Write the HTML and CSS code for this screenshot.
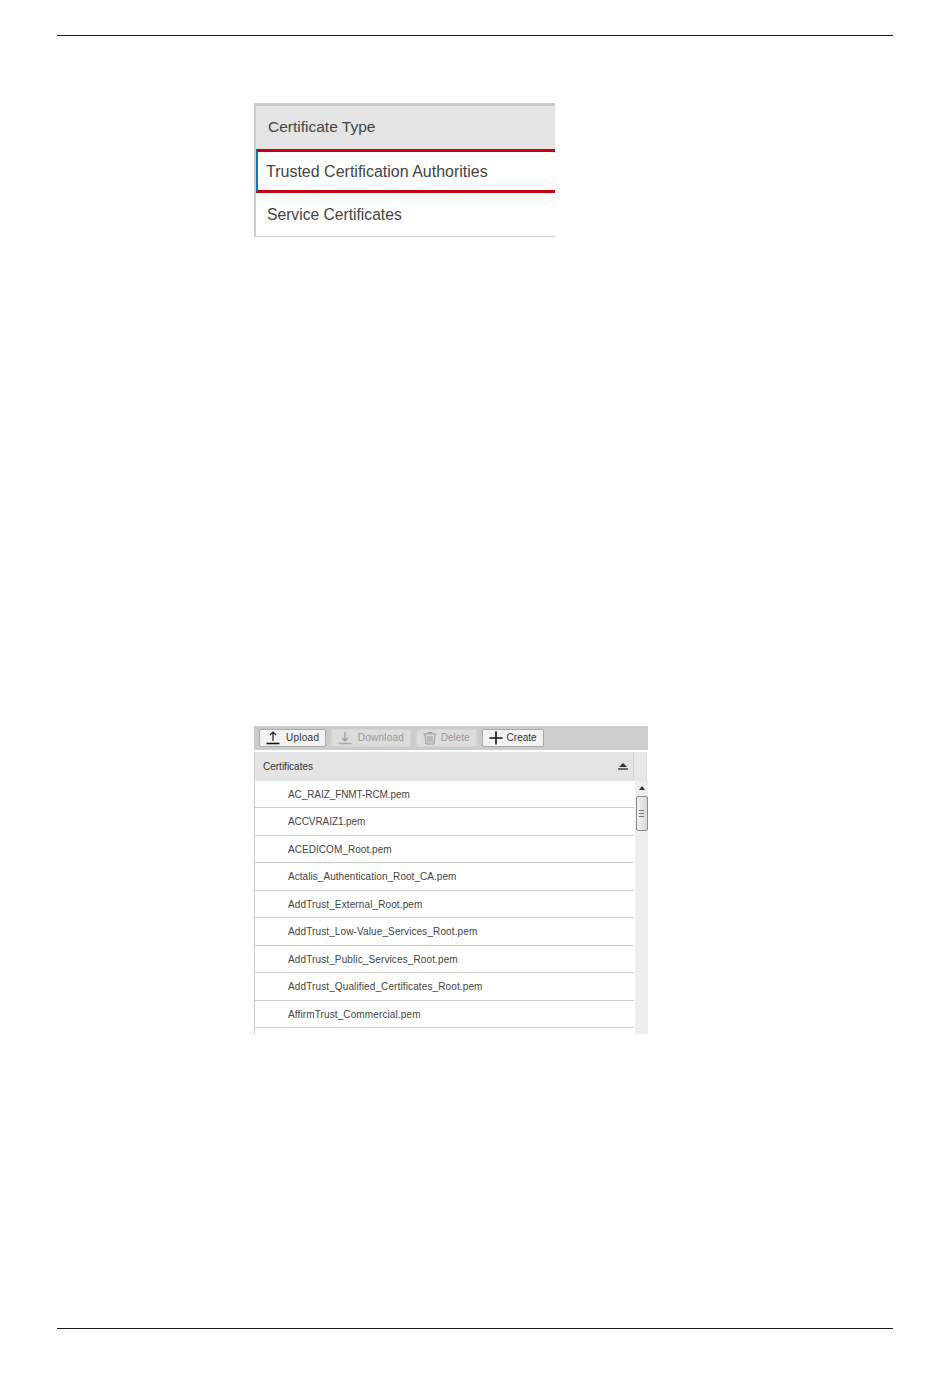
FILE: index.html
```html
<!DOCTYPE html>
<html lang="en">
<head>
<meta charset="utf-8">
<title>Certificates</title>
<link rel="stylesheet" href="styles.css">
</head>
<body>
<div class="page">
  <hr class="rule">
  <main class="content">
    <section class="type-card">
      <div class="type-head">Certificate Type</div>
      <div class="type-row selected">Trusted Certification Authorities</div>
      <div class="type-row">Service Certificates</div>
    </section>
    <section class="cert-card">
      <div class="toolbar">
        <button class="tool">
          <svg class="ico" viewBox="0 0 14 14"><path d="M7 1 L7 10 M4 4 L7 1 L10 4" fill="none" stroke="#222" stroke-width="1.2"/><path d="M0.5 12.5H13.5" stroke="#111" stroke-width="1.6"/></svg>
          <span>Upload</span>
        </button>
        <button class="tool off">
          <svg class="ico" viewBox="0 0 14 14"><path d="M7 1 L7 10 M4 7 L7 10 L10 7" fill="none" stroke="#999" stroke-width="1.2"/><path d="M0.5 12.5H13.5" stroke="#aaa" stroke-width="1.6"/></svg>
          <span>Download</span>
        </button>
        <button class="tool off tight">
          <svg class="ico" viewBox="0 0 14 14"><path d="M0.5 3H13.5M5 3V1.5H9V3M2 3.5L3 13H11L12 3.5M5 5V11.5M7 5V11.5M9 5V11.5" fill="none" stroke="#999" stroke-width="1"/></svg>
          <span>Delete</span>
        </button>
        <button class="tool tight">
          <svg class="ico" viewBox="0 0 14 14"><path d="M7 0.5V13.5M0.5 7H13.5" fill="none" stroke="#111" stroke-width="1.6"/></svg>
          <span>Create</span>
        </button>
      </div>
      <div class="grid-head">
        <div class="grid-title">
          <span>Certificates</span>
          <svg class="sort" viewBox="0 0 10 7"><path d="M5 0L9 4H1Z" fill="#333"/><path d="M0 6H10" stroke="#222" stroke-width="1.2"/></svg>
        </div>
        <div class="grid-corner"></div>
      </div>
      <div class="grid-body">
        <ul class="list">
          <li class="caps">AC_RAIZ_FNMT-RCM.pem</li>
          <li class="caps">ACCVRAIZ1.pem</li>
          <li class="flat">ACEDICOM_Root.pem</li>
          <li class="flat">Actalis_Authentication_Root_CA.pem</li>
          <li>AddTrust_External_Root.pem</li>
          <li>AddTrust_Low-Value_Services_Root.pem</li>
          <li>AddTrust_Public_Services_Root.pem</li>
          <li>AddTrust_Qualified_Certificates_Root.pem</li>
          <li>AffirmTrust_Commercial.pem</li>
        </ul>
        <div class="scroll">
          <svg class="arrow" viewBox="0 0 6 4"><path d="M3 0L6 4H0Z" fill="#333"/></svg>
          <div class="thumb"><i></i><i></i><i></i></div>
        </div>
      </div>
    </section>
  </main>
  <hr class="rule">
</div>
</body>
</html>
```
FILE: styles.css
```css
* { box-sizing: border-box; }
html, body { margin: 0; background: #fff; }
body { font-family: "Liberation Sans", Arial, sans-serif; color: #3a3a3a; }
.page { height: 1378px; padding: 35px 57px 0; display: flex; flex-direction: column; }
.rule { margin: 0; border: 0; height: 1px; background: #1a1a1a; flex: none; }
.content { height: 1292px; padding: 67px 0 0 197px; display: flex; flex-direction: column; }

.type-card { width: 301px; height: 134px; border: solid #ccc; border-width: 3px 0 1px 2px; display: flex; flex-direction: column; }
.type-head { height: 43px; background: #e4e4e4; padding-left: 12px; font-size: 15.5px; line-height: 42px; color: #444; }
.type-row { padding-left: 11px; font-size: 15.65px; color: #444; line-height: 43px; flex: 1; }
.type-row.selected { flex: none; height: 44px; border-top: 3px solid #c8000f; border-bottom: 3px solid #c8000f; border-left: 2px solid #0a78b8; padding-left: 8px; font-size: 16px; line-height: 40px; }

.cert-card { margin-top: 489px; width: 394px; height: 308px; overflow: hidden; display: flex; flex-direction: column; }
.toolbar { height: 24px; flex: none; background: #ccc; display: flex; gap: 5px; padding: 3px 0 0 5px; align-items: flex-start; }
.tool { height: 18px; padding: 0 5.5px 1px 6px; display: flex; align-items: center; gap: 6px; background: #f2f2f2; border: 1px solid #aaa; border-radius: 2px; font: 10px "Liberation Sans", Arial, sans-serif; letter-spacing: 0.25px; color: #333; }
.tool.off { background: #dcdcdc; border-color: #d4d4d4; color: #999; }
.tool.tight { gap: 4px; letter-spacing: 0; padding-right: 6px; }
.ico { width: 14px; height: 14px; flex: none; }

.grid-head { height: 29px; flex: none; margin-top: 2px; display: flex; }
.grid-title { width: 380px; background: #e4e4e4; border-left: 1px solid #ccc; border-right: 1px solid #d4d4d4; padding: 0 5px 0 8px; display: flex; align-items: center; justify-content: space-between; font-size: 10px; color: #333; }
.sort { width: 10px; height: 7px; }
.grid-corner { width: 13px; background: #e8e8e8; border-right: 1px solid #ddd; }

.grid-body { flex: 1; min-height: 0; display: flex; }
.list { width: 380px; margin: 0; padding: 0; list-style: none; border-left: 1px solid #ccc; }
.list li { height: 27.5px; padding: 6px 0 0 33px; font-size: 10px; line-height: 16px; letter-spacing: 0.12px; color: #444; border-bottom: 1px solid #ccc; }
.list li:first-child { height: 27px; }
.list li.caps { letter-spacing: -0.08px; }
.list li.flat { letter-spacing: 0.05px; }
.scroll { width: 13px; margin-left: 1px; background: #eee; display: flex; flex-direction: column; align-items: center; }
.arrow { width: 6px; height: 4px; margin-top: 5px; flex: none; }
.thumb { width: 12px; height: 35px; margin-top: 6px; flex: none; background: linear-gradient(to right, #f0f0f0, #d8d8d8); border: 1px solid #8c8c8c; border-radius: 2px; display: flex; flex-direction: column; align-items: center; justify-content: center; gap: 2px; }
.thumb i { display: block; width: 5px; height: 1px; background: #777; }
```
